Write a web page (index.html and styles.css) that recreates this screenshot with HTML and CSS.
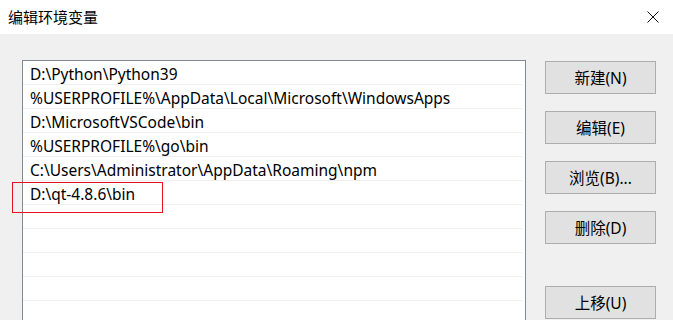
FILE: index.html
```html
<!DOCTYPE html>
<html lang="zh-CN">
<head>
    <meta charset="UTF-8">
    <title>编辑环境变量</title>
    <link rel="stylesheet" href="styles.css">
</head>
<body>
    <div class="dialog">
        <div class="title-bar">
            <span class="title-text">编辑环境变量</span>
            <span class="close-button">
                <svg width="12" height="12" viewBox="0 0 12 12">
                    <path d="M0.5 0.5 L11.5 11.5 M11.5 0.5 L0.5 11.5" stroke="#111" stroke-width="1" fill="none"/>
                </svg>
            </span>
        </div>
        <div class="dialog-body">
            <div class="path-list">
                <div class="path-row">D:\Python\Python39</div>
                <div class="path-row">%USERPROFILE%\AppData\Local\Microsoft\WindowsApps</div>
                <div class="path-row">D:\MicrosoftVSCode\bin</div>
                <div class="path-row">%USERPROFILE%\go\bin</div>
                <div class="path-row">C:\Users\Administrator\AppData\Roaming\npm</div>
                <div class="path-row">D:\qt-4.8.6\bin</div>
                <div class="path-row"></div>
                <div class="path-row"></div>
                <div class="path-row"></div>
                <div class="path-row"></div>
                <div class="path-row"></div>
                <!-- highlight box drawn over the new entry -->
                <div class="highlight-box"></div>
            </div>
            <div class="button-column">
                <button class="dialog-button">新建(N)</button>
                <button class="dialog-button">编辑(E)</button>
                <button class="dialog-button">浏览(B)...</button>
                <button class="dialog-button">删除(D)</button>
                <button class="dialog-button move-up">上移(U)</button>
            </div>
        </div>
    </div>
</body>
</html>
```

FILE: styles.css
```css
* {
    margin: 0;
    padding: 0;
    box-sizing: border-box;
}

body {
    font-family: "Noto Sans", "Noto Sans CJK SC", sans-serif;
    font-size: 15.5px;
    color: #000000;
    background-color: #f0f0f0;
    width: 673px;
    height: 320px;
    overflow: hidden;
}

.dialog {
    height: 320px;
    overflow: hidden;
}

.title-bar {
    height: 34px;
    background-color: #ffffff;
    display: flex;
    align-items: center;
    justify-content: space-between;
    padding: 0 14px 0 8px;
}

.title-text {
    font-family: "Noto Sans CJK SC", sans-serif;
    font-size: 15px;
    line-height: 20px;
}

.close-button {
    display: flex;
}

.dialog-body {
    display: flex;
    align-items: flex-start;
    padding: 26px 0 0 22px;
}

.path-list {
    position: relative;
    width: 504px;
    height: 300px;
    background-color: #ffffff;
    border: 1px solid #828790;
}

.path-row {
    height: 24px;
    line-height: 22px;
    padding: 2px 0 0 7px;
    margin-right: 2px;
    border-bottom: 1px solid #f0f0f0;
    white-space: nowrap;
}

.highlight-box {
    position: absolute;
    left: -11px;
    top: 121px;
    width: 151px;
    height: 31px;
    border: 1px solid #e81123;
}

.button-column {
    display: flex;
    flex-direction: column;
    gap: 17px;
    margin-left: 19px;
    padding-top: 1px;
}

.dialog-button {
    width: 111px;
    height: 33px;
    background-color: #e1e1e1;
    border: 1px solid #adadad;
    font-family: "Noto Sans", "Noto Sans CJK SC", sans-serif;
    font-size: 15.5px;
    color: #000000;
}

.move-up {
    margin-top: 25px;
}
```
